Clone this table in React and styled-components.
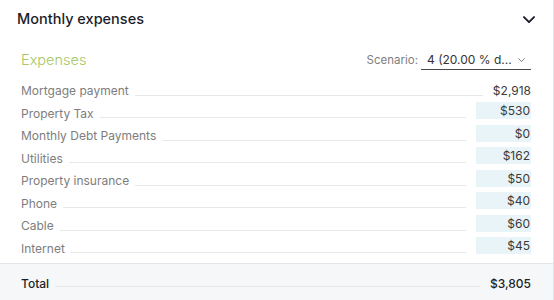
import React from "react";
import styled, { createGlobalStyle } from "styled-components";

const Global = createGlobalStyle`
  html, body { margin: 0; padding: 0; background: #ffffff; }
  body { font-family: Inter, "Noto Sans", sans-serif; }
  * { box-sizing: border-box; }
`;

const Panel = styled.div`
  width: 554px;
  height: 300px;
  overflow: hidden;
  background: #ffffff;
  border-right: 1px solid #e2e5e8;
  display: flex;
  flex-direction: column;
`;

const Header = styled.div`
  height: 38px;
  padding: 0 17px 0 17px;
  display: flex;
  align-items: center;
  justify-content: space-between;
`;

const Title = styled.h2`
  margin: 0;
  font-size: 14.5px;
  font-weight: 500;
  color: #1b1c2a;
`;

const IconButton = styled.button`
  border: 0;
  background: none;
  padding: 0;
  width: 14px;
  height: 14px;
  margin-top: 1px;
  display: flex;
  align-items: center;
  justify-content: center;
  color: #1b1c2a;
`;

const Body = styled.div`
  flex: 1;
  padding: 0 22px 4px 21px;
  display: flex;
  flex-direction: column;
`;

const SectionHead = styled.div`
  height: 42px;
  display: flex;
  align-items: flex-start;
  justify-content: space-between;
  padding-top: 14px;
`;

const SectionTitle = styled.div`
  font-size: 14.5px;
  font-weight: 300;
  color: #a7c766;
`;

const Scenario = styled.div`
  display: flex;
  align-items: flex-start;
  gap: 3px;
  margin-top: 1px;
`;

const ScenarioLabel = styled.span`
  font-size: 11.5px;
  color: #7f7f7f;
  line-height: 16px;
`;

const Select = styled.div`
  width: 110px;
  height: 18px;
  border-bottom: 1px solid #4a4a4a;
  display: flex;
  align-items: flex-start;
  justify-content: space-between;
  padding: 0 6px 0 6px;
  font-size: 12px;
  line-height: 16px;
  color: #333333;
`;

const Rows = styled.div`
  display: flex;
  flex-direction: column;
`;

const Row = styled.div`
  height: 22.5px;
  display: flex;
  align-items: flex-start;
`;

const Label = styled.span`
  font-size: 12px;
  line-height: 17px;
  margin-top: 3px;
  color: ${(p) => (p.$strong ? "#1f1f24" : "#7d7d7d")};
  font-weight: ${(p) => (p.$strong ? 500 : 400)};
  white-space: nowrap;
`;

const Leader = styled.span`
  flex: 1;
  height: 1px;
  background: #e7e8ea;
  margin: ${(p) => p.$top || "15.3px"} 10px 0 6px;
`;

const Value = styled.span`
  font-size: 12px;
  line-height: 17px;
  color: ${(p) => (p.$strong ? "#1f1f24" : "#3a3a3a")};
  font-weight: ${(p) => (p.$strong ? 500 : 400)};
  margin-top: ${(p) => (p.$boxed ? "0.5px" : "3px")};
  width: ${(p) => (p.$boxed ? "55px" : "auto")};
  height: 17px;
  text-align: right;
  padding-right: ${(p) => (p.$boxed ? "1px" : "0")};
  background: ${(p) => (p.$boxed ? "#e9f4f8" : "transparent")};
`;

const TotalBar = styled.div`
  height: 37px;
  background: #f6f7f9;
  border-top: 1px solid #e1e4e8;
  padding: 7.5px 22px 0 21px;
`;

const TotalRow = styled.div`
  display: flex;
  align-items: flex-start;
`;

const Chevron = ({ size = 12, stroke = 1.8 }) => (
  <svg width={size} height={size * 0.6} viewBox="0 0 12 7" fill="none">
    <polyline points="1,1 6,6 11,1" stroke="currentColor" strokeWidth={stroke} strokeLinecap="round" strokeLinejoin="round" />
  </svg>
);

const SmallChevron = styled.span`
  margin-top: 6px;
  color: #444;
  display: flex;
`;

const items = [
  { label: "Mortgage payment", value: "$2,918", boxed: false },
  { label: "Property Tax", value: "$530", boxed: true },
  { label: "Monthly Debt Payments", value: "$0", boxed: true },
  { label: "Utilities", value: "$162", boxed: true },
  { label: "Property insurance", value: "$50", boxed: true },
  { label: "Phone", value: "$40", boxed: true },
  { label: "Cable", value: "$60", boxed: true },
  { label: "Internet", value: "$45", boxed: true },
];

export default function App() {
  return (
    <>
      <Global />
      <Panel>
        <Header>
          <Title>Monthly expenses</Title>
          <IconButton aria-label="Collapse">
            <Chevron size={12} stroke={1.9} />
          </IconButton>
        </Header>
        <Body>
          <SectionHead>
            <SectionTitle>Expenses</SectionTitle>
            <Scenario>
              <ScenarioLabel>Scenario:</ScenarioLabel>
              <Select>
                <span>4 (20.00 % d...</span>
                <SmallChevron>
                  <Chevron size={7} stroke={1.2} />
                </SmallChevron>
              </Select>
            </Scenario>
          </SectionHead>
          <Rows>
            {items.map((it) => (
              <Row key={it.label}>
                <Label>{it.label}</Label>
                <Leader />
                <Value $boxed={it.boxed}>{it.value}</Value>
              </Row>
            ))}
          </Rows>
        </Body>
        <TotalBar>
          <TotalRow>
            <Label $strong>Total</Label>
            <Leader $top="14.4px" />
            <Value $strong>{"$3,805"}</Value>
          </TotalRow>
        </TotalBar>
      </Panel>
    </>
  );
}
